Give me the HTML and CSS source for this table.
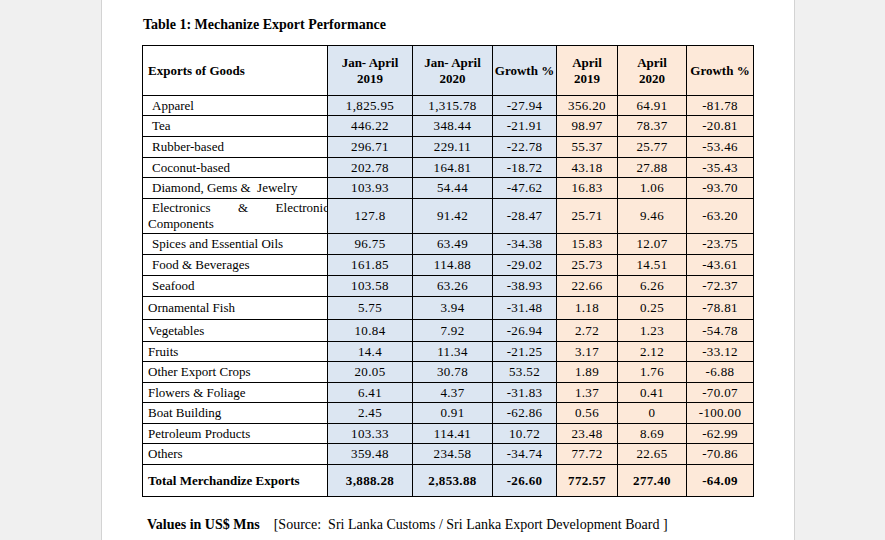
FILE: index.html
```html
<!DOCTYPE html>
<html>
<head>
<meta charset="utf-8">
<link rel="stylesheet" href="styles.css">
</head>
<body>
<div class="page">
  <h1 class="title">Table 1: Mechanize Export Performance</h1>
  <table class="exp">
    <colgroup>
      <col class="c-name"><col class="c-j19"><col class="c-j20"><col class="c-g1"><col class="c-a19"><col class="c-a20"><col class="c-g2">
    </colgroup>
    <thead>
      <tr class="hdr">
        <th class="name">Exports of Goods</th>
        <th class="b">Jan- April<br>2019</th>
        <th class="b">Jan- April<br>2020</th>
        <th class="b">Growth %</th>
        <th class="o">April<br>2019</th>
        <th class="o">April<br>2020</th>
        <th class="o">Growth %</th>
      </tr>
    </thead>
    <tbody>
      <tr class="r20"><td class="name ind">Apparel</td><td class="b">1,825.95</td><td class="b">1,315.78</td><td class="b">-27.94</td><td class="o">356.20</td><td class="o">64.91</td><td class="o">-81.78</td></tr>
      <tr class="r21"><td class="name ind">Tea</td><td class="b">446.22</td><td class="b">348.44</td><td class="b">-21.91</td><td class="o">98.97</td><td class="o">78.37</td><td class="o">-20.81</td></tr>
      <tr class="r21"><td class="name ind">Rubber-based</td><td class="b">296.71</td><td class="b">229.11</td><td class="b">-22.78</td><td class="o">55.37</td><td class="o">25.77</td><td class="o">-53.46</td></tr>
      <tr class="r20"><td class="name ind">Coconut-based</td><td class="b">202.78</td><td class="b">164.81</td><td class="b">-18.72</td><td class="o">43.18</td><td class="o">27.88</td><td class="o">-35.43</td></tr>
      <tr class="r21"><td class="name ind">Diamond, Gems &amp;&nbsp; Jewelry</td><td class="b">103.93</td><td class="b">54.44</td><td class="b">-47.62</td><td class="o">16.83</td><td class="o">1.06</td><td class="o">-93.70</td></tr>
      <tr class="r35"><td class="name split"><div class="just"><span>Electronics</span><span>&amp;</span><span>Electronic</span></div><div>Components</div></td><td class="b">127.8</td><td class="b">91.42</td><td class="b">-28.47</td><td class="o">25.71</td><td class="o">9.46</td><td class="o">-63.20</td></tr>
      <tr class="r21"><td class="name ind">Spices and Essential Oils</td><td class="b">96.75</td><td class="b">63.49</td><td class="b">-34.38</td><td class="o">15.83</td><td class="o">12.07</td><td class="o">-23.75</td></tr>
      <tr class="r21"><td class="name ind">Food &amp; Beverages</td><td class="b">161.85</td><td class="b">114.88</td><td class="b">-29.02</td><td class="o">25.73</td><td class="o">14.51</td><td class="o">-43.61</td></tr>
      <tr class="r21"><td class="name ind">Seafood</td><td class="b">103.58</td><td class="b">63.26</td><td class="b">-38.93</td><td class="o">22.66</td><td class="o">6.26</td><td class="o">-72.37</td></tr>
      <tr class="r23"><td class="name">Ornamental Fish</td><td class="b">5.75</td><td class="b">3.94</td><td class="b">-31.48</td><td class="o">1.18</td><td class="o">0.25</td><td class="o">-78.81</td></tr>
      <tr class="r22"><td class="name">Vegetables</td><td class="b">10.84</td><td class="b">7.92</td><td class="b">-26.94</td><td class="o">2.72</td><td class="o">1.23</td><td class="o">-54.78</td></tr>
      <tr class="r20"><td class="name">Fruits</td><td class="b">14.4</td><td class="b">11.34</td><td class="b">-21.25</td><td class="o">3.17</td><td class="o">2.12</td><td class="o">-33.12</td></tr>
      <tr class="r21"><td class="name">Other Export Crops</td><td class="b">20.05</td><td class="b">30.78</td><td class="b">53.52</td><td class="o">1.89</td><td class="o">1.76</td><td class="o">-6.88</td></tr>
      <tr class="r20"><td class="name">Flowers &amp; Foliage</td><td class="b">6.41</td><td class="b">4.37</td><td class="b">-31.83</td><td class="o">1.37</td><td class="o">0.41</td><td class="o">-70.07</td></tr>
      <tr class="r21"><td class="name">Boat Building</td><td class="b">2.45</td><td class="b">0.91</td><td class="b">-62.86</td><td class="o">0.56</td><td class="o">0</td><td class="o">-100.00</td></tr>
      <tr class="r20"><td class="name">Petroleum Products</td><td class="b">103.33</td><td class="b">114.41</td><td class="b">10.72</td><td class="o">23.48</td><td class="o">8.69</td><td class="o">-62.99</td></tr>
      <tr class="r21"><td class="name">Others</td><td class="b">359.48</td><td class="b">234.58</td><td class="b">-34.74</td><td class="o">77.72</td><td class="o">22.65</td><td class="o">-70.86</td></tr>
      <tr class="r32 total"><td class="name">Total Merchandize Exports</td><td class="b">3,888.28</td><td class="b">2,853.88</td><td class="b">-26.60</td><td class="o">772.57</td><td class="o">277.40</td><td class="o">-64.09</td></tr>
    </tbody>
  </table>
  <p class="note"><strong>Values in US$ Mns</strong><span class="src">[Source:&nbsp; Sri Lanka Customs / Sri Lanka Export Development Board ]</span></p>
</div>
</body>
</html>
```
FILE: styles.css
```css
html, body {
  margin: 0;
  padding: 0;
}
body {
  background: #f0f0f0;
  font-family: "Liberation Serif", "Times New Roman", serif;
  color: #000;
  width: 885px;
  height: 540px;
  overflow: hidden;
}
.page {
  margin-left: 101px;
  width: 694px;
  height: 540px;
  background: #fff;
  border-left: 1px solid #d3d3d3;
  border-right: 1px solid #d3d3d3;
  padding: 16px 0 0 40px;
  box-sizing: border-box;
}
.title {
  font-size: 14px;
  font-weight: bold;
  line-height: 18px;
  margin: 0 0 11px 1px;
}
.exp {
  border-collapse: collapse;
  table-layout: fixed;
  width: 611px;
  font-size: 13px;
  line-height: 16px;
}
.c-name { width: 185px; }
.c-j19 { width: 85px; }
.c-j20 { width: 80px; }
.c-g1 { width: 64px; }
.c-a19 { width: 61px; }
.c-a20 { width: 69px; }
.c-g2 { width: 67px; }
.exp th, .exp td {
  border: 1px solid #000;
  padding: 0;
  text-align: center;
  vertical-align: middle;
  white-space: nowrap;
  overflow: hidden;
}
.exp th { font-weight: bold; }
.exp td.b, .exp td.o { letter-spacing: 0.35px; }
.exp .name {
  text-align: left;
  padding-left: 5px;
}
.exp .ind { padding-left: 9px; }
.exp .b { background: #dce6f2; }
.exp .o { background: #fde9d9; }
.hdr { height: 50px; }
.r20 { height: 20px; }
.r21 { height: 21px; }
.r22 { height: 22px; }
.r23 { height: 23px; }
.r32 { height: 32px; }
.r35 { height: 35px; }
.total td { font-weight: bold; }
.split { padding-right: 0 !important; }
.just {
  display: flex;
  justify-content: space-between;
  padding-left: 4px;
  margin-right: -2px;
}
.note {
  margin: 19px 0 0 5px;
  font-size: 14px;
  line-height: 18px;
}
.src { margin-left: 14px; }
```
